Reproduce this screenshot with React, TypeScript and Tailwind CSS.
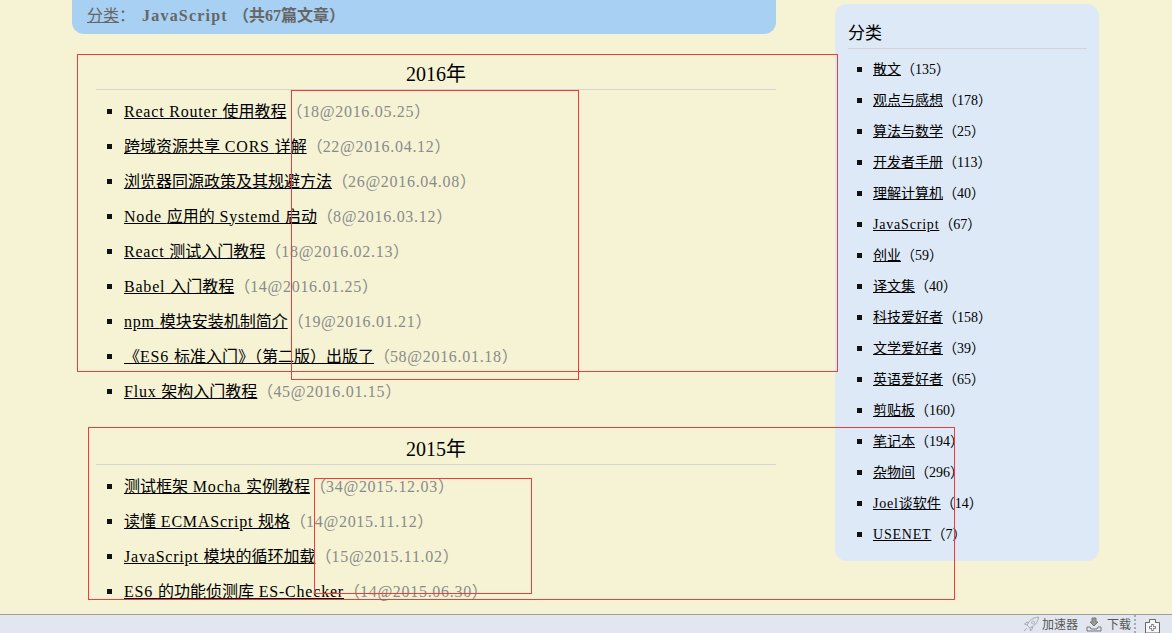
const serif = "font-['Georgia','Liberation_Serif','Noto_Sans_CJK_SC',serif]"

type Post = { title: string; meta: string }

const posts2016: Post[] = [
  { title: "React Router 使用教程", meta: "18@2016.05.25" },
  { title: "跨域资源共享 CORS 详解", meta: "22@2016.04.12" },
  { title: "浏览器同源政策及其规避方法", meta: "26@2016.04.08" },
  { title: "Node 应用的 Systemd 启动", meta: "8@2016.03.12" },
  { title: "React 测试入门教程", meta: "18@2016.02.13" },
  { title: "Babel 入门教程", meta: "14@2016.01.25" },
  { title: "npm 模块安装机制简介", meta: "19@2016.01.21" },
  { title: "《ES6 标准入门》（第二版）出版了", meta: "58@2016.01.18" },
  { title: "Flux 架构入门教程", meta: "45@2016.01.15" },
]

const posts2015: Post[] = [
  { title: "测试框架 Mocha 实例教程", meta: "34@2015.12.03" },
  { title: "读懂 ECMAScript 规格", meta: "14@2015.11.12" },
  { title: "JavaScript 模块的循环加载", meta: "15@2015.11.02" },
  { title: "ES6 的功能侦测库 ES-Checker", meta: "14@2015.06.30" },
]

const categories = [
  ["散文", "135"],
  ["观点与感想", "178"],
  ["算法与数学", "25"],
  ["开发者手册", "113"],
  ["理解计算机", "40"],
  ["JavaScript", "67"],
  ["创业", "59"],
  ["译文集", "40"],
  ["科技爱好者", "158"],
  ["文学爱好者", "39"],
  ["英语爱好者", "65"],
  ["剪贴板", "160"],
  ["笔记本", "194"],
  ["杂物间", "296"],
  ["Joel谈软件", "14"],
  ["USENET", "7"],
]

// 西文比中文字宽一些，单独加字距
function Mixed({ text }: { text: string }) {
  return (
    <>
      {text.split(/([\x00-\x7f]+)/).map((part, i) =>
        i % 2 === 1 ? (
          <span key={i} className="tracking-[0.8px]">{part}</span>
        ) : (
          part
        )
      )}
    </>
  )
}

function Bullet() {
  return <span className="w-[5px] h-[5px] bg-[#111] shrink-0" />
}

function YearBlock({ year, posts }: { year: string; posts: Post[] }) {
  return (
    <div>
      <h2 className="h-[31px] border-b border-[#d4d4d4] text-center text-[20px] leading-[30px] text-black ml-6">
        {year}
      </h2>
      <ul className="pt-1 ml-[35px]">
        {posts.map((p) => (
          <li key={p.meta} className="flex items-center h-[35px] gap-[12px] text-[16px] whitespace-nowrap">
            <Bullet />
            <span>
              <a className="text-black underline"><Mixed text={p.title} /></a>
              <span className="text-[#8a8a8a]">（<span className="tracking-[0.7px]">{p.meta}</span>）</span>
            </span>
          </li>
        ))}
      </ul>
    </div>
  )
}

export default function App() {
  return (
    <div className={`${serif} relative h-[633px] w-[1172px] overflow-hidden flex flex-col bg-[#f5f3d4]`}>
      <div className="flex-1 min-h-0 flex items-start overflow-hidden">
        {/* 主栏 */}
        <div className="w-[704px] ml-[72px]">
          <div className="h-[34px] rounded-b-[12px] bg-[#a8d0f3] pl-[15px] flex items-center text-[16px] text-[#666] pb-[3px]">
            <span className="underline">分类</span>
            <span>：</span>
            <span className="font-bold ml-[7px]">
              <span className="tracking-[1.2px]">JavaScript </span>（共67篇文章）
            </span>
          </div>
          <div className="pt-[25px]">
            <YearBlock year="2016年" posts={posts2016} />
          </div>
          <div className="pt-[25px]">
            <YearBlock year="2015年" posts={posts2015} />
          </div>
        </div>

        {/* 侧栏 */}
        <div className="ml-[59px] mt-1 w-[264px] h-[557px] rounded-[12px] bg-[#dde9f6] pl-[13px] pr-[12px] pt-[15px]">
          <h2 className="h-[30px] border-b border-[#d4d4d4] text-[17px] leading-[30px] text-black">分类</h2>
          <ul className="pt-[5px] pl-[9px]">
            {categories.map(([name, count]) => (
              <li key={name} className="flex items-center h-[31px] gap-[11px] text-[14px] whitespace-nowrap">
                <Bullet />
                <span className="text-black">
                  <a className="underline"><Mixed text={name} /></a>（{count}）
                </span>
              </li>
            ))}
          </ul>
        </div>
      </div>

      {/* 浏览器状态栏 */}
      <div className="h-[19px] shrink-0 border-t border-[#a0a0a0] bg-[#e2e6ef] flex items-center justify-end text-[12px] text-[#555] font-['Noto_Sans_CJK_SC',sans-serif]">
        <svg width="17" height="16" viewBox="0 0 17 16" fill="none" stroke="#a3abb5" strokeWidth="1">
          <path d="M4 9 C6 4 10 2 15.5 1 C15 6 12 10 7 12 Z" />
          <path d="M6 7 L4 6 L1.5 8 L4 9 M9 10 L9.5 12.5 L7.5 15 L7 12 M4 12 L1 15 M10 5 A1.5 1.5 0 1 0 10.1 5" />
        </svg>
        <span className="ml-[2px]">加速器</span>
        <svg className="ml-2" width="16" height="15" viewBox="0 0 16 15" fill="none" stroke="#777" strokeWidth="1">
          <path d="M6 1 H10 V5 H12 L8 9 L4 5 H6 Z" fill="#999" />
          <path d="M1 10 H4 L5 12 H11 L12 10 H15 V14 H1 Z" />
        </svg>
        <span className="ml-[5px]">下载</span>
        <span className="ml-[3px] w-[2px] h-full border-l-2 border-dotted border-[#a5a9b0]" />
        <svg className="ml-2 mr-[11px] mt-1" width="17" height="14" viewBox="0 0 17 14" fill="#f4f5f8" stroke="#666" strokeWidth="1">
          <path d="M1.5 3.5 H5.5 V0.5 H11.5 V3.5 H15.5 V14 H1.5 Z" />
          <path d="M8.5 5 V12 M5 8.5 H12" fill="none" stroke="#777" strokeWidth="2.4" />
          <path d="M8.5 6 V11 M6 8.5 H11" fill="none" stroke="#fff" strokeWidth="0.9" />
        </svg>
      </div>

      {/* 红色标注框 */}
      <div className="absolute left-[77px] top-[54px] w-[761px] h-[318px] border border-[#f33a3a]" />
      <div className="absolute left-[291px] top-[90px] w-[288px] h-[290px] border border-[#f33a3a]" />
      <div className="absolute left-[88px] top-[427px] w-[867px] h-[173px] border border-[#f33a3a]" />
      <div className="absolute left-[314px] top-[478px] w-[218px] h-[116px] border border-[#f33a3a]" />
    </div>
  )
}
